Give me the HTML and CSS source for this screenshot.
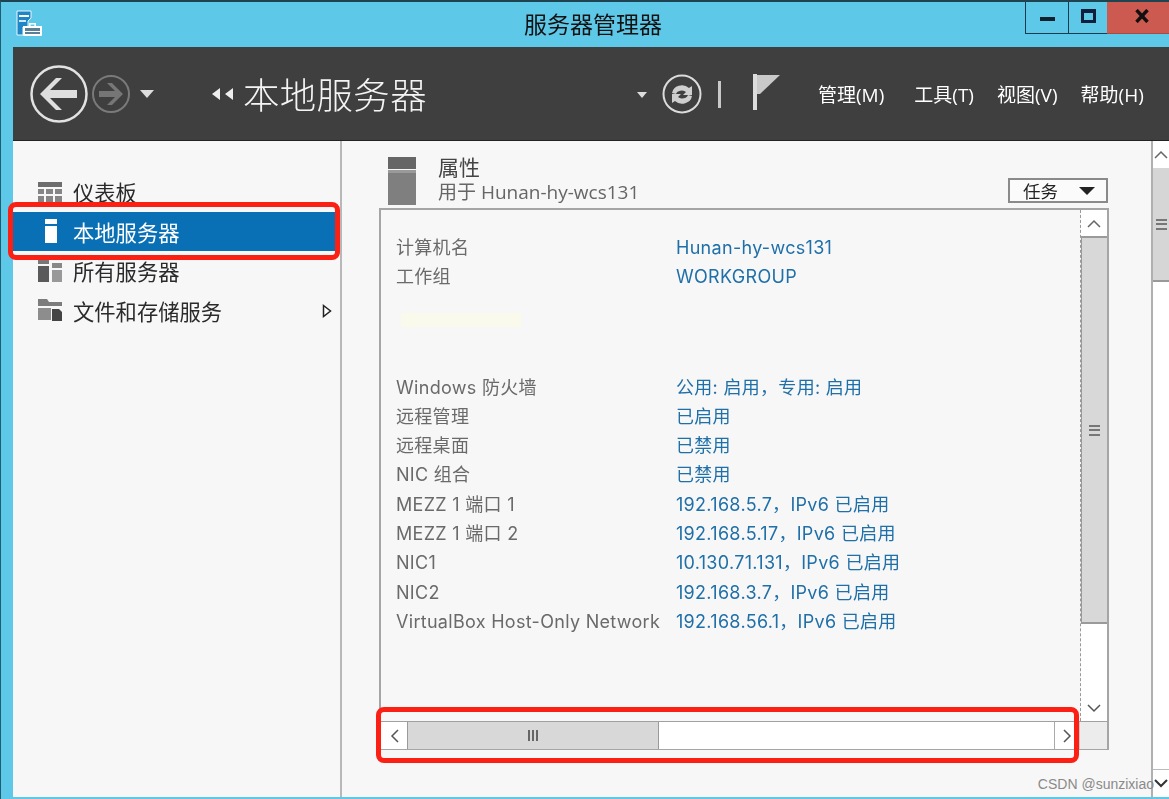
FILE: index.html
```html
<!DOCTYPE html>
<html lang="zh-CN">
<head>
    <meta charset="UTF-8">
    <title>服务器管理器</title>
    <link rel="stylesheet" href="styles.css">
</head>
<body>
<div class="window">
    <div class="titlebar">
        <svg class="app-icon" width="28" height="28" viewBox="0 0 28 28">
            <path d="M2 1h14v7l-3 3v6H8v8H2z" fill="#1e86c8" stroke="#e8f6fb" stroke-width="1"/>
            <path d="M4 5h10v2H4z" fill="#fff"/>
            <path d="M4 10h7v2H4z" fill="#cfe8f5"/>
            <path d="M8 25V16h19v9q0 1-1 1H9q-1 0-1-1z" fill="#fff"/>
            <path d="M14 16v-3h7v3h-1.600v-1.500h-3.800V16z" fill="#fff"/>
            <path d="M10 18h15v3H10zM10 22h15v2H10z" fill="#5b7f95"/>
        </svg>
        <div class="title">服务器管理器</div>
        <div class="win-buttons">
            <div class="win-btn min-btn"><span class="min-glyph"></span></div>
            <div class="win-btn max-btn"><span class="max-glyph"></span></div>
            <div class="win-btn close-btn">
                <svg width="14" height="14" viewBox="0 0 14 14"><path d="M1.500 1l11 12M12.500 1l-11 12" stroke="#111" stroke-width="3.400" fill="none"/></svg>
            </div>
        </div>
    </div>

    <div class="toolbar">
        <svg class="back-icon" width="60" height="60" viewBox="0 0 60 60">
            <circle cx="30" cy="30" r="27.500" fill="none" stroke="#e2e2e2" stroke-width="2.500"/>
            <path d="M11 30L27 14h6L21 26h27v8H21l12 12h-6z" fill="#dedede"/>
        </svg>
        <svg class="fwd-icon" width="40" height="40" viewBox="0 0 40 40">
            <circle cx="20" cy="20" r="18" fill="none" stroke="#7a7a7a" stroke-width="2"/>
            <path d="M32 20L21 9h-5l8 8H8v6h16l-8 8h5z" fill="#767676"/>
        </svg>
        <span class="caret caret-light nav-caret"></span>
        <svg class="crumb-arrows" width="22" height="12" viewBox="0 0 22 12">
            <path d="M0 6l8-6v12zM13 6l8-6v12z" fill="#eee"/>
        </svg>
        <div class="page-title">本地服务器</div>
        <span class="caret caret-light refresh-caret"></span>
        <svg class="refresh-icon" width="40" height="40" viewBox="0 0 40 40">
            <circle cx="20" cy="20" r="18.500" fill="none" stroke="#dcdcdc" stroke-width="2"/>
            <path d="M10 19a10 9 0 0 1 17-5l3-2v9h-9l3-3a6 5 0 0 0-10 2zM30 22a10 9 0 0 1-17 5l-3 2v-9h9l-3 3a6 5 0 0 0 10-2z" fill="#cfcfcf"/>
        </svg>
        <span class="tool-sep"></span>
        <svg class="flag-icon" width="28" height="38" viewBox="0 0 28 38">
            <path d="M1 1h4v36H1z" fill="#dcdcdc"/>
            <path d="M5 2h23L8 21H5z" fill="#c9c9c9"/>
        </svg>
        <nav class="menu">
            <span>管理(M)</span>
            <span>工具(T)</span>
            <span>视图(V)</span>
            <span>帮助(H)</span>
        </nav>
    </div>

    <div class="main">
        <aside class="sidebar">
            <div class="side-item">
                <svg width="26" height="20" viewBox="0 0 26 20"><path d="M1 0h24v5H1z" fill="#6d6d6d"/><path d="M1 7h6v5H1zM9 7h7v5H9zM18 7h7v5h-7zM1 14h6v6H1zM9 14h7v6H9zM18 14h7v6h-7z" fill="#858585"/></svg>
                <span>仪表板</span>
            </div>
            <div class="side-item active">
                <svg width="26" height="26" viewBox="0 0 26 26"><path d="M8 1h12v5H8z" fill="#fff"/><path d="M8 8h12v17H8z" fill="#fff"/></svg>
                <span>本地服务器</span>
            </div>
            <div class="side-item">
                <svg width="26" height="24" viewBox="0 0 26 24"><path d="M1 0h11v5H1z" fill="#777"/><path d="M1 7h11v16H1z" fill="#5a5a5a"/><path d="M15 4h10v5H15z" fill="#888"/><path d="M15 11h10v12H15z" fill="#999"/></svg>
                <span>所有服务器</span>
            </div>
            <div class="side-item">
                <svg width="26" height="24" viewBox="0 0 26 24"><path d="M1 1h9l2 3h13v4H1z" fill="#7c7c7c"/><path d="M1 10h13v12H1z" fill="#8d8d8d"/><path d="M15 11h7l3 3v9H15z" fill="#444"/></svg>
                <span>文件和存储服务</span>
                <svg class="side-arrow" width="10" height="14" viewBox="0 0 10 14"><path d="M1.500 1.500l7 5.500-7 5.500z" fill="#fff" stroke="#222" stroke-width="1.500"/></svg>
            </div>
        </aside>

        <section class="content">
            <div class="content-head">
                <svg class="server-icon" width="28" height="48" viewBox="0 0 28 48">
                    <path d="M0 0h28v12H0z" fill="#666"/>
                    <path d="M0 13h28v35H0z" fill="#7f7f7f"/>
                    <path d="M0 13h28v3H0z" fill="#9a9a9a"/>
                </svg>
                <div class="head-text">
                    <div class="head-title">属性</div>
                    <div class="head-sub">用于 Hunan-hy-wcs131</div>
                </div>
                <div class="task-btn">任务<span class="caret caret-dark"></span></div>
            </div>

            <div class="panel">
                <div class="panel-top">
                    <div class="props">
                        <div class="prop"><span class="prop-name">计算机名</span><span class="prop-val">Hunan-hy-wcs131</span></div>
                        <div class="prop"><span class="prop-name">工作组</span><span class="prop-val">WORKGROUP</span></div>
                        <div class="prop-gap"><span class="smudge"></span></div>
                        <div class="prop"><span class="prop-name">Windows 防火墙</span><span class="prop-val">公用: 启用，专用: 启用</span></div>
                        <div class="prop"><span class="prop-name">远程管理</span><span class="prop-val">已启用</span></div>
                        <div class="prop"><span class="prop-name">远程桌面</span><span class="prop-val">已禁用</span></div>
                        <div class="prop"><span class="prop-name">NIC 组合</span><span class="prop-val">已禁用</span></div>
                        <div class="prop"><span class="prop-name">MEZZ 1 端口 1</span><span class="prop-val">192.168.5.7，IPv6 已启用</span></div>
                        <div class="prop"><span class="prop-name">MEZZ 1 端口 2</span><span class="prop-val">192.168.5.17，IPv6 已启用</span></div>
                        <div class="prop"><span class="prop-name">NIC1</span><span class="prop-val">10.130.71.131，IPv6 已启用</span></div>
                        <div class="prop"><span class="prop-name">NIC2</span><span class="prop-val">192.168.3.7，IPv6 已启用</span></div>
                        <div class="prop"><span class="prop-name">VirtualBox Host-Only Network</span><span class="prop-val">192.168.56.1，IPv6 已启用</span></div>
                    </div>
                    <div class="vscroll">
                        <div class="sb-btn">
                            <svg width="14" height="9" viewBox="0 0 14 9"><path d="M1 8l6-6 6 6" fill="none" stroke="#666" stroke-width="1.500"/></svg>
                        </div>
                        <div class="v-thumb"><span class="grip-h"></span></div>
                        <div class="v-track"></div>
                        <div class="sb-btn">
                            <svg width="14" height="9" viewBox="0 0 14 9"><path d="M1 1l6 6 6-6" fill="none" stroke="#555" stroke-width="1.500"/></svg>
                        </div>
                    </div>
                </div>
                <div class="hscroll">
                    <div class="h-btn">
                        <svg width="9" height="14" viewBox="0 0 9 14"><path d="M8 1L2 7l6 6" fill="none" stroke="#555" stroke-width="1.500"/></svg>
                    </div>
                    <div class="h-thumb"><span class="grip-v"></span></div>
                    <div class="h-track"></div>
                    <div class="h-btn h-btn-end">
                        <svg width="9" height="14" viewBox="0 0 9 14"><path d="M1 1l6 6-6 6" fill="none" stroke="#555" stroke-width="1.500"/></svg>
                    </div>
                    <div class="corner"></div>
                </div>
            </div>
        </section>

        <div class="outer-scroll">
            <div class="sb-btn outer-btn">
                <svg width="14" height="9" viewBox="0 0 14 9"><path d="M1 8l6-6 6 6" fill="none" stroke="#666" stroke-width="1.500"/></svg>
            </div>
            <div class="outer-thumb"><span class="grip-h"></span></div>
            <div class="outer-track"></div>
            <div class="sb-btn outer-btn">
                <svg width="14" height="9" viewBox="0 0 14 9"><path d="M1 1l6 6 6-6" fill="none" stroke="#333" stroke-width="2"/></svg>
            </div>
        </div>
    </div>
</div>

<!-- annotations drawn on top of the screenshot -->
<div class="mark mark-side"></div>
<div class="mark mark-scroll"></div>
<div class="watermark">CSDN @sunzixiao</div>
</body>
</html>
```

FILE: styles.css
```css
html, body {
    margin: 0;
    padding: 0;
}

body {
    position: relative;
    width: 1169px;
    height: 799px;
    overflow: hidden;
    font-family: "Open Sans", "Noto Sans CJK SC", sans-serif;
    background-color: #f7f7f7;
}

.window {
    box-sizing: border-box;
    width: 1169px;
    height: 799px;
    display: flex;
    flex-direction: column;
    background-color: #5ec8e8;
    border-top: 2px solid #1d4450;
    border-left: 1px solid #1d5f70;
    padding-bottom: 2px;
    filter: blur(0.4px);
}

.titlebar {
    position: relative;
    height: 45px;
    flex: none;
}

.app-icon {
    position: absolute;
    left: 14px;
    top: 8px;
}

.title {
    text-align: center;
    font-size: 23px;
    line-height: 45px;
    color: #111;
    padding-left: 16px;
}

.win-buttons {
    position: absolute;
    right: 0;
    top: 0;
    display: flex;
    height: 32px;
}

.win-btn {
    box-sizing: border-box;
    height: 32px;
    display: flex;
    align-items: center;
    justify-content: center;
    border-left: 1px solid #1a3a50;
    border-bottom: 1px solid #1a3a50;
    padding-bottom: 4px;
}

.min-btn {
    width: 43px;
}

.max-btn {
    width: 39px;
}

.close-btn {
    width: 62px;
    background-color: #cc5a50;
    border-left: none;
    border-bottom: 1px solid #a84a44;
    padding-left: 8px;
}

.min-glyph {
    display: block;
    width: 15px;
    height: 4px;
    margin-top: 6px;
    background-color: #10202c;
}

.max-glyph {
    display: block;
    box-sizing: border-box;
    width: 15px;
    height: 14px;
    border: 3px solid #10203c;
    border-top-width: 4px;
    background-color: #5ec8e8;
}

.toolbar {
    position: relative;
    height: 94px;
    flex: none;
    margin-left: 12px;
    display: flex;
    align-items: center;
    background-color: #403f3f;
    color: #fff;
    border-bottom: 1px solid #222;
    box-sizing: border-box;
}

.back-icon {
    margin-left: 16px;
}

.fwd-icon {
    margin-left: 2px;
}

.caret {
    display: inline-block;
    width: 0;
    height: 0;
    border-left: 7px solid transparent;
    border-right: 7px solid transparent;
}

.caret-light {
    border-top: 8px solid #ddd;
}

.caret-dark {
    border-top: 8px solid #222;
    margin-left: 21px;
    border-left-width: 8px;
    border-right-width: 8px;
}

.nav-caret {
    margin-left: 9px;
}

.crumb-arrows {
    margin-left: 58px;
}

.page-title {
    margin-left: 9px;
    font-size: 36.400px;
    font-weight: 300;
    color: #f4f4f4;
    letter-spacing: 0.4px;
}

.refresh-caret {
    position: absolute;
    left: 624px;
    top: 45px;
    border-left-width: 5px;
    border-right-width: 5px;
    border-top-width: 6px;
}

.refresh-icon {
    position: absolute;
    left: 649px;
    top: 27px;
}

.tool-sep {
    position: absolute;
    left: 705px;
    top: 34px;
    width: 3px;
    height: 27px;
    background-color: #c8c8c8;
}

.flag-icon {
    position: absolute;
    left: 739px;
    top: 26px;
}

.menu {
    position: absolute;
    left: 805px;
    top: 0;
    height: 93px;
    display: flex;
    align-items: center;
    gap: 23px;
    font-size: 19px;
}

.menu span:first-child {
    margin-right: 7px;
}

.main {
    flex: 1;
    display: flex;
    min-height: 0;
    margin-left: 12px;
    background-color: #f7f7f7;
}

.sidebar {
    box-sizing: border-box;
    width: 329px;
    flex: none;
    border-right: 2px solid #b8b8b8;
    padding-top: 31px;
}

.side-item {
    position: relative;
    height: 39.500px;
    display: flex;
    align-items: center;
    font-size: 21.300px;
    color: #2a2a2a;
    padding-left: 24px;
}

.side-item span {
    margin-left: 10px;
}

.side-item.active {
    background-color: #0a70b5;
    color: #fff;
}

.side-arrow {
    position: absolute;
    right: 8px;
    top: 13px;
}

.content {
    flex: 1;
    min-width: 0;
    padding: 14px 0 0 37px;
    display: flex;
    flex-direction: column;
}

.content-head {
    position: relative;
    height: 51px;
    flex: none;
    display: flex;
    padding-left: 9px;
    padding-right: 43px;
}

.head-text {
    margin-left: 22px;
    flex: 1;
    color: #555;
}

.head-title {
    font-size: 21px;
    line-height: 25px;
    color: #444;
}

.head-sub {
    font-size: 19px;
    line-height: 24px;
    color: #666;
}

.server-icon {
    margin-top: 2px;
}

.task-btn {
    box-sizing: border-box;
    align-self: flex-end;
    width: 100px;
    height: 25px;
    margin-bottom: 3px;
    border: 2px solid #8a8a8a;
    display: flex;
    align-items: center;
    justify-content: flex-end;
    padding-right: 11px;
    font-size: 17.500px;
    color: #222;
    background-color: #fbfbfb;
}

.panel {
    box-sizing: border-box;
    width: 730px;
    height: 542px;
    margin-top: 2px;
    flex: none;
    display: flex;
    flex-direction: column;
    border: 2px solid #a5a5a5;
    border-bottom-width: 1px;
    background-color: #f7f7f7;
}

.panel-top {
    flex: 1;
    min-height: 0;
    display: flex;
}

.props {
    flex: 1;
    padding-top: 23px;
    font-family: Inter, "Noto Sans CJK SC", sans-serif;
    font-size: 18px;
    letter-spacing: 0.3px;
    color: #6a6a6a;
}

.prop {
    display: flex;
    height: 29.300px;
    line-height: 29.300px;
    white-space: nowrap;
}

.prop-name {
    width: 295px;
    padding-left: 15px;
    box-sizing: border-box;
    flex: none;
}

.prop-val {
    color: #1f6fa8;
}

.prop-gap {
    height: 81px;
    position: relative;
}

.smudge {
    position: absolute;
    left: 20px;
    top: 21px;
    width: 120px;
    height: 14px;
    background-color: #f9f9ec;
}

.vscroll {
    box-sizing: border-box;
    width: 27px;
    flex: none;
    display: flex;
    flex-direction: column;
    border-left: 1px dashed #999;
    margin-right: 0;
}

.sb-btn {
    height: 26px;
    flex: none;
    display: flex;
    align-items: center;
    justify-content: center;
    background-color: #fff;
}

.v-thumb {
    height: 388px;
    flex: none;
    display: flex;
    align-items: center;
    justify-content: center;
    box-sizing: border-box;
    border-top: 2px solid #9a9a9a;
    border-bottom: 2px solid #9a9a9a;
    border-left: 1px solid #9a9a9a;
    background-color: #d8d8d8;
}

.v-track {
    flex: 1;
    background-color: #fff;
}

.grip-h {
    width: 11px;
    height: 7px;
    border-top: 2px solid #777;
    border-bottom: 2px solid #777;
    background: linear-gradient(#d8d8d8 0 2px, #777 2px 4px, #d8d8d8 4px);
}

.hscroll {
    height: 27px;
    flex: none;
    display: flex;
    border-top: 1px solid #a0a0a0;
}

.h-btn {
    width: 26px;
    flex: none;
    display: flex;
    align-items: center;
    justify-content: center;
    background-color: #fff;
}

.h-btn-end {
    width: 25px;
    border-left: 1px solid #aaa;
    box-sizing: border-box;
}

.h-thumb {
    box-sizing: border-box;
    width: 252px;
    flex: none;
    display: flex;
    align-items: center;
    justify-content: center;
    background-color: #d8d8d8;
    border-left: 1px solid #9a9a9a;
    border-right: 1px solid #9a9a9a;
}

.grip-v {
    width: 11px;
    height: 11px;
    background: repeating-linear-gradient(90deg, #666 0 2px, #d8d8d8 2px 4px);
}

.h-track {
    flex: 1;
    background-color: #fff;
}

.corner {
    width: 27px;
    flex: none;
    background-color: #ececec;
    border-left: 1px solid #ccc;
}

.outer-scroll {
    width: 18px;
    flex: none;
    display: flex;
    flex-direction: column;
    box-sizing: border-box;
    border-left: 2px solid #b0b0b0;
    background-color: #fff;
}

.outer-btn {
    height: 27px;
}

.outer-thumb {
    height: 114px;
    flex: none;
    display: flex;
    align-items: center;
    justify-content: center;
    background-color: #d6d6d6;
    border-bottom: 2px solid #999;
    box-sizing: border-box;
}

.outer-track {
    flex: 1;
    border-bottom: 1px solid #bbb;
}

.mark {
    position: absolute;
    box-sizing: border-box;
    border: 5px solid #fb1f14;
    border-radius: 8px;
}

.mark-side {
    left: 8px;
    top: 202px;
    width: 332px;
    height: 58px;
}

.mark-scroll {
    left: 376px;
    top: 707px;
    width: 703px;
    height: 56px;
}

.watermark {
    position: absolute;
    right: 15px;
    bottom: 7px;
    font-family: "Liberation Sans", sans-serif;
    font-size: 14px;
    color: #8a8a8a;
}
```
